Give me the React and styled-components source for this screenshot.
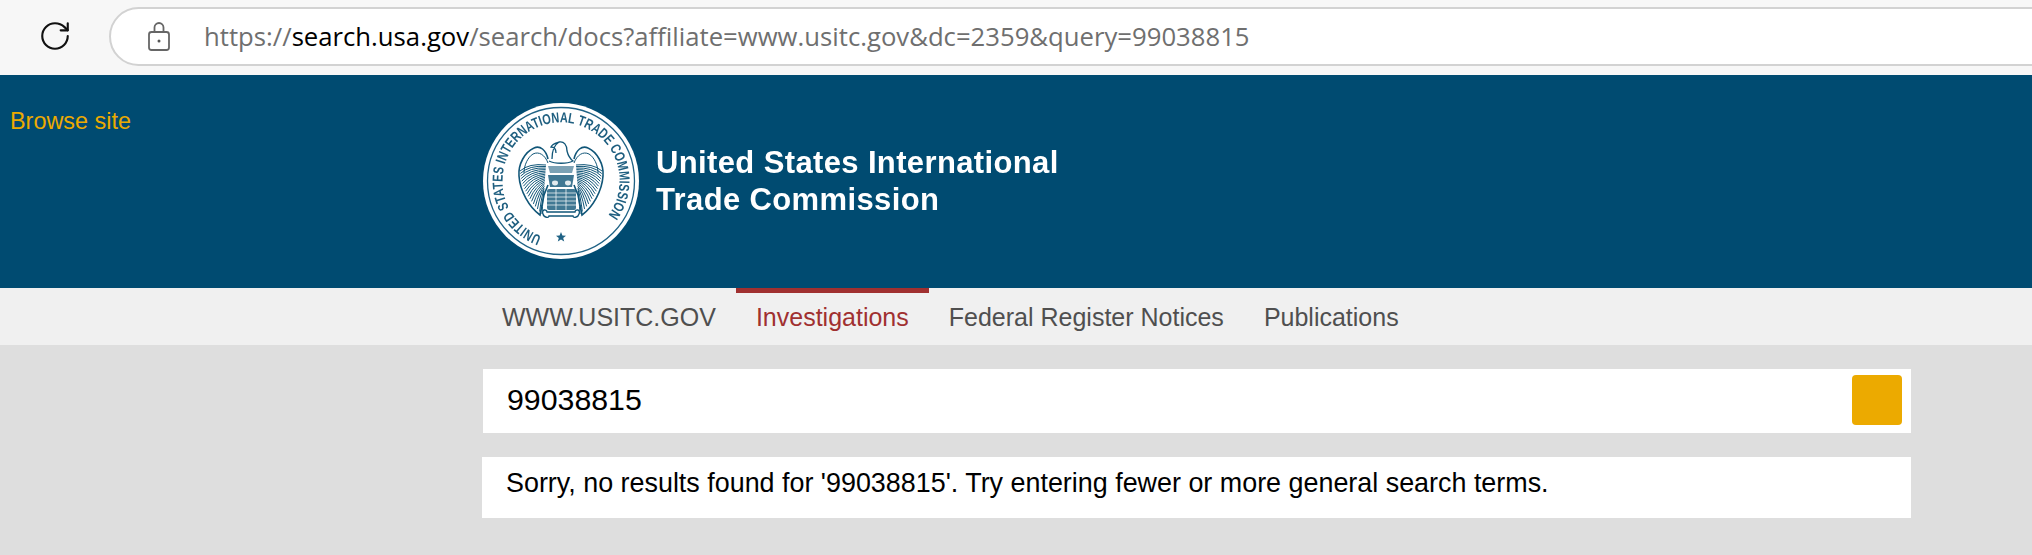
import React from "react";
import styled, { createGlobalStyle } from "styled-components";
import { RotateCw } from "lucide-react";

const GlobalStyle = createGlobalStyle`
  html, body {
    margin: 0;
    height: 100%;
    overflow: hidden;
    background: #dedede;
  }
  * { box-sizing: border-box; }
`;

const Page = styled.div`
  font-family: "Liberation Sans", Arial, sans-serif;
  width: 2032px;
  height: 555px;
  overflow: hidden;
  background: #dedede;
`;

const BrowserBar = styled.div`
  height: 75px;
  background: #f7f7f7;
  display: flex;
  align-items: center;
  padding: 0 0 3px 38px;
`;

const ReloadButton = styled.div`
  width: 34px;
  height: 34px;
  margin-right: 37px;
  color: #111;
  display: flex;
  align-items: center;
  justify-content: center;
`;

const AddressPill = styled.div`
  flex: 1;
  height: 59px;
  margin-right: -60px;
  background: #fff;
  border: 2px solid #d2d2d2;
  border-radius: 30px;
  display: flex;
  align-items: center;
  padding-left: 36px;
`;

const LockIcon = styled.svg`
  width: 24px;
  height: 30px;
  margin-right: 33px;
  flex: none;
`;

const Url = styled.div`
  font-family: "Open Sans", sans-serif;
  font-size: 25.7px;
  color: #6f6f6f;
  white-space: nowrap;

  b {
    font-weight: 400;
    color: #000;
  }
`;

const Banner = styled.header`
  height: 213px;
  background: #004b71;
  display: flex;
  align-items: flex-start;
`;

const BrowseLink = styled.a`
  width: 482px;
  padding: 32px 0 0 10px;
  font-size: 23.4px;
  line-height: 28px;
  color: #ecaa00;
`;

const Logo = styled.div`
  display: flex;
  align-items: center;
  padding-top: 27px;
  gap: 16px;
`;

const LogoName = styled.div`
  width: 404px;
  overflow: hidden;
  color: #fff;
  font-weight: 700;
  font-size: 31px;
  line-height: 37px;
  letter-spacing: 0.37px;
  white-space: nowrap;
  filter: blur(0.5px);
`;

const Nav = styled.nav`
  height: 57px;
  background: #f0f0f0;
  padding-left: 482px;
  display: flex;
`;

const NavItem = styled.a`
  height: 57px;
  padding: 0 20px;
  padding-top: ${(p) => (p.$active ? "0" : "5px")};
  line-height: 49px;
  font-size: 25px;
  color: ${(p) => (p.$active ? "#a03030" : "#4f4f4f")};
  border-top: ${(p) => (p.$active ? "5px solid #a03030" : "0")};
  white-space: nowrap;
`;

const Content = styled.main`
  width: 1429px;
  margin-left: 482px;
  padding-top: 24px;
`;

const SearchBox = styled.div`
  width: 1428px;
  margin-left: 1px;
  height: 64px;
  background: #fff;
  display: flex;
  align-items: center;
  justify-content: space-between;
  padding: 0 8px 0 24px;
`;

const Query = styled.div`
  font-size: 30.3px;
  line-height: 30px;
  padding-bottom: 3px;
  color: #000;
`;

const SearchButton = styled.div`
  width: 50px;
  height: 50px;
  margin: 0 1px 2px 0;
  background: #ecaa00;
  border-radius: 4px;
`;

const ResultBox = styled.div`
  height: 61px;
  margin-top: 24px;
  background: #fff;
  padding: 11px 0 0 24px;
  font-size: 26.9px;
  line-height: 30px;
  color: #000;
  white-space: nowrap;
`;

const SealSvg = styled.svg`
  width: 158px;
  height: 158px;
  flex: none;
  display: block;
  filter: blur(0.5px);
`;

const SealText = styled.text`
  font-family: "Liberation Sans", Arial, sans-serif;
  font-size: 14.5px;
  font-weight: 700;
  fill: #1f5f80;
`;

const feathers = Array.from({ length: 18 }, (_, i) => i);

function Wing({ flip }) {
  return (
    <g transform={flip ? "scale(-1 1)" : undefined} fill="none" stroke="#115678" strokeWidth="1">
      <path
        d="M-13 -22 C-15 -31 -21 -36 -27 -33 C-36 -29 -43 -17 -42 -5 C-41 10 -32 26 -21 34 L-17 14 L-13 4"
        strokeWidth="1.6"
      />
      <path d="M-13 -18 C-16 -26 -22 -30 -28 -27 C-33 -24 -37 -16 -37 -8" />
      {feathers.map((i) => {
        const t = i / 17;
        const endX = -41 + 19 * t * t + 3 * t;
        const endY = -10 + 43 * t;
        const startX = -15 - 2 * t;
        const startY = -16 + 26 * t;
        const midX = (startX + endX) / 2 - 4 + 4 * t;
        const midY = (startY + endY) / 2 - 5;
        return <path key={i} d={`M${startX} ${startY} Q${midX} ${midY} ${endX} ${endY}`} />;
      })}
    </g>
  );
}

function Seal() {
  return (
    <SealSvg viewBox="-79 -79 158 158">
      <defs>
        <path id="sealArc" d="M -19.5 55 A 58.5 58.5 0 1 1 19.5 55" />
      </defs>
      <circle r="78" fill="#fff" />
      <circle r="73.5" fill="none" stroke="#1f6285" strokeWidth="1.3" />
      <SealText>
        <textPath href="#sealArc" textLength="292" lengthAdjust="spacingAndGlyphs">
          UNITED STATES INTERNATIONAL TRADE COMMISSION
        </textPath>
      </SealText>
      <polygon
        points="0,51 1.4,54.6 5,54.8 2.2,57 3.2,60.6 0,58.6 -3.2,60.6 -2.2,57 -5,54.8 -1.4,54.6"
        fill="#1f6285"
      />
      <Wing />
      <Wing flip />
      <g fill="none" stroke="#115678" strokeWidth="1.3">
        <path d="M-9 -22 C-9 -30 -7 -36 -2 -39 C-5 -38 -9 -37 -10 -34 C-7 -34 -5 -32 -5 -28 M-2 -39 C3 -40 6 -36 6 -30 C7 -26 8 -23 12 -20 C6 -17 -6 -17 -12 -20" />
        <path d="M-18 33 C-20 28 -14 28 -14 31 L14 31 C14 28 20 28 18 33 C17 37 12 37 12 35 L-12 35 C-12 37 -17 37 -18 33 Z" />
      </g>
      <g fill="#115678">
        <path d="M-13 -15 L13 -15 L11 -8 L-11 -8 Z" opacity="0.55" />
        <path d="M-13 -6 L13 -6 L11 6 L-11 6 Z" opacity="0.8" />
        <rect x="-14" y="8" width="29" height="21" rx="2" opacity="0.8" />
      </g>
      <g fill="#fff" opacity="0.85">
        <ellipse cx="-6" cy="2" rx="3" ry="2.4" />
        <ellipse cx="7" cy="2" rx="3" ry="2.4" />
      </g>
      <g stroke="#fff" strokeWidth="0.7">
        <path d="M-14 12 H15 M-14 16 H15 M-14 20 H15 M-14 24 H15 M-5 8 V29 M5 8 V29" />
      </g>
    </SealSvg>
  );
}

export default function App() {
  return (
    <Page>
      <GlobalStyle />
      <BrowserBar>
        <ReloadButton>
          <RotateCw size={34} strokeWidth={1.5} />
        </ReloadButton>
        <AddressPill>
          <LockIcon viewBox="0 0 24 30" fill="none" stroke="#666" strokeWidth="1.8">
            <rect x="2" y="11" width="20" height="18" rx="2.5" />
            <path d="M7.5 11 V6.5 a4.5 4.5 0 0 1 9 0 V11" />
            <circle cx="12" cy="20" r="1.5" fill="#555" stroke="none" />
          </LockIcon>
          <Url>
            https://<b>search.usa.gov</b>/search/docs?affiliate=www.usitc.gov&amp;dc=2359&amp;query=99038815
          </Url>
        </AddressPill>
      </BrowserBar>
      <Banner>
        <BrowseLink>Browse site</BrowseLink>
        <Logo>
          <Seal />
          <LogoName>
            United States International
            <br />
            Trade Commission
          </LogoName>
        </Logo>
      </Banner>
      <Nav>
        <NavItem>WWW.USITC.GOV</NavItem>
        <NavItem $active>Investigations</NavItem>
        <NavItem>Federal Register Notices</NavItem>
        <NavItem>Publications</NavItem>
      </Nav>
      <Content>
        <SearchBox>
          <Query>99038815</Query>
          <SearchButton />
        </SearchBox>
        <ResultBox>Sorry, no results found for '99038815'. Try entering fewer or more general search terms.</ResultBox>
      </Content>
    </Page>
  );
}
